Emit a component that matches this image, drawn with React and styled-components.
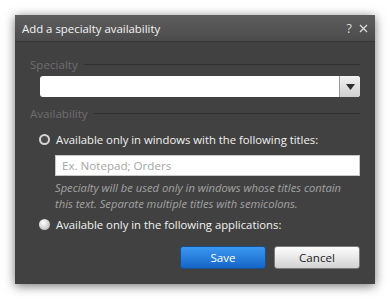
import React from 'react'
import styled, { createGlobalStyle } from 'styled-components'

const Global = createGlobalStyle`
  body {
    margin: 0;
    background: #ffffff;
    font-family: "Open Sans", "Noto Sans", sans-serif;
  }
`

const Page = styled.div`
  padding: 15px;
`

const Dialog = styled.div`
  width: 360px;
  height: 269px;
  background: #414141;
  box-shadow: 0 2px 10px rgba(0, 0, 0, 0.55);
  display: flex;
  flex-direction: column;
`

const TitleBar = styled.div`
  height: 26px;
  flex: none;
  display: flex;
  align-items: center;
  justify-content: space-between;
  padding: 0 7px;
  background: linear-gradient(#5e5e5e, #4b4b4b);
  border-bottom: 1px solid #363636;
  color: #f4f4f4;
  font-size: 11.4px;
`

const TitleTools = styled.div`
  display: flex;
  align-items: center;
  gap: 7px;
  color: #d8d8d8;
  font-size: 12.5px;
`

const Body = styled.div`
  padding: 14px 15px 0 15px;
  display: flex;
  flex-direction: column;
`

const GroupHeader = styled.div`
  display: flex;
  align-items: center;
  gap: 6px;
  color: #6e6e6e;
  font-size: 11.6px;
  height: 16px;
  margin-top: ${p => p.$top || 0}px;
  &::after {
    content: "";
    flex: 1;
    height: 1px;
    background: #2f2f2f;
  }
`

const Indent = styled.div`
  padding-left: ${p => p.$left}px;
  margin-top: ${p => p.$top || 0}px;
`

const Select = styled.div`
  height: 21px;
  background: #ffffff;
  border-radius: 3px;
  display: flex;
  justify-content: flex-end;
  overflow: hidden;
`

const SelectArrow = styled.div`
  width: 20px;
  display: flex;
  align-items: center;
  justify-content: center;
  background: linear-gradient(#f2f2f2, #cfcfcf);
  border-left: 1px solid #9a9a9a;
`

const RadioRow = styled.label`
  display: flex;
  align-items: center;
  gap: 6px;
  color: #f2f2f2;
  font-size: 11.3px;
  height: 18px;
`

const Radio = styled.span`
  width: 11px;
  height: 11px;
  border-radius: 50%;
  box-sizing: border-box;
  flex: none;
  ${p => p.$checked
    ? 'border: 2px solid #d6d6d6; background: #4a4a4a;'
    : 'background: radial-gradient(circle at 40% 35%, #ffffff, #c4c4c4 70%, #9a9a9a);'}
`

const TextInput = styled.input`
  display: block;
  width: 100%;
  height: 21px;
  box-sizing: border-box;
  border: 1px solid #c8c8c8;
  padding: 0 6px;
  font-family: inherit;
  font-size: 11.6px;
  &::placeholder {
    color: #a6a6a6;
  }
`

const Help = styled.p`
  margin: 4px 0 0;
  color: #a3a3a3;
  font-style: italic;
  font-size: 11.2px;
  line-height: 16px;
`

const Buttons = styled.div`
  display: flex;
  justify-content: flex-end;
  gap: 8px;
  margin-top: 13px;
`

const Button = styled.button`
  width: 86px;
  height: 23px;
  border-radius: 3px;
  font-family: inherit;
  font-size: 11.6px;
  padding: 0;
  border: 1px solid ${p => (p.$primary ? '#1b4f8c' : '#7a7a7a')};
  color: ${p => (p.$primary ? '#ffffff' : '#1d1d1d')};
  background: ${p =>
    p.$primary
      ? 'linear-gradient(#3b98f2, #1565c6)'
      : 'linear-gradient(#fdfdfd, #d2d2d2)'};
`

export default function App() {
  return (
    <Page>
      <Global />
      <Dialog>
        <TitleBar>
          <span>Add a specialty availability</span>
          <TitleTools>
            <span>?</span>
            <svg width="9" height="9" viewBox="0 0 9 9">
              <path d="M1 1L8 8M8 1L1 8" stroke="#dcdcdc" strokeWidth="1.3" />
            </svg>
          </TitleTools>
        </TitleBar>
        <Body>
          <GroupHeader>Specialty</GroupHeader>
          <Indent $left={10} $top={4}>
            <Select>
              <SelectArrow>
                <svg width="9" height="6" viewBox="0 0 9 6">
                  <path d="M0 0H9L4.5 6Z" fill="#2e2e2e" />
                </svg>
              </SelectArrow>
            </Select>
          </Indent>
          <GroupHeader $top={8}>Availability</GroupHeader>
          <Indent $left={9} $top={9}>
            <RadioRow>
              <Radio $checked />
              Available only in windows with the following titles:
            </RadioRow>
          </Indent>
          <Indent $left={25} $top={7}>
            <TextInput placeholder="Ex. Notepad; Orders" />
            <Help>
              Specialty will be used only in windows whose titles contain this text. Separate multiple titles with semicolons.
            </Help>
          </Indent>
          <Indent $left={9} $top={3}>
            <RadioRow>
              <Radio />
              Available only in the following applications:
            </RadioRow>
          </Indent>
          <Buttons>
            <Button $primary>Save</Button>
            <Button>Cancel</Button>
          </Buttons>
        </Body>
      </Dialog>
    </Page>
  )
}
